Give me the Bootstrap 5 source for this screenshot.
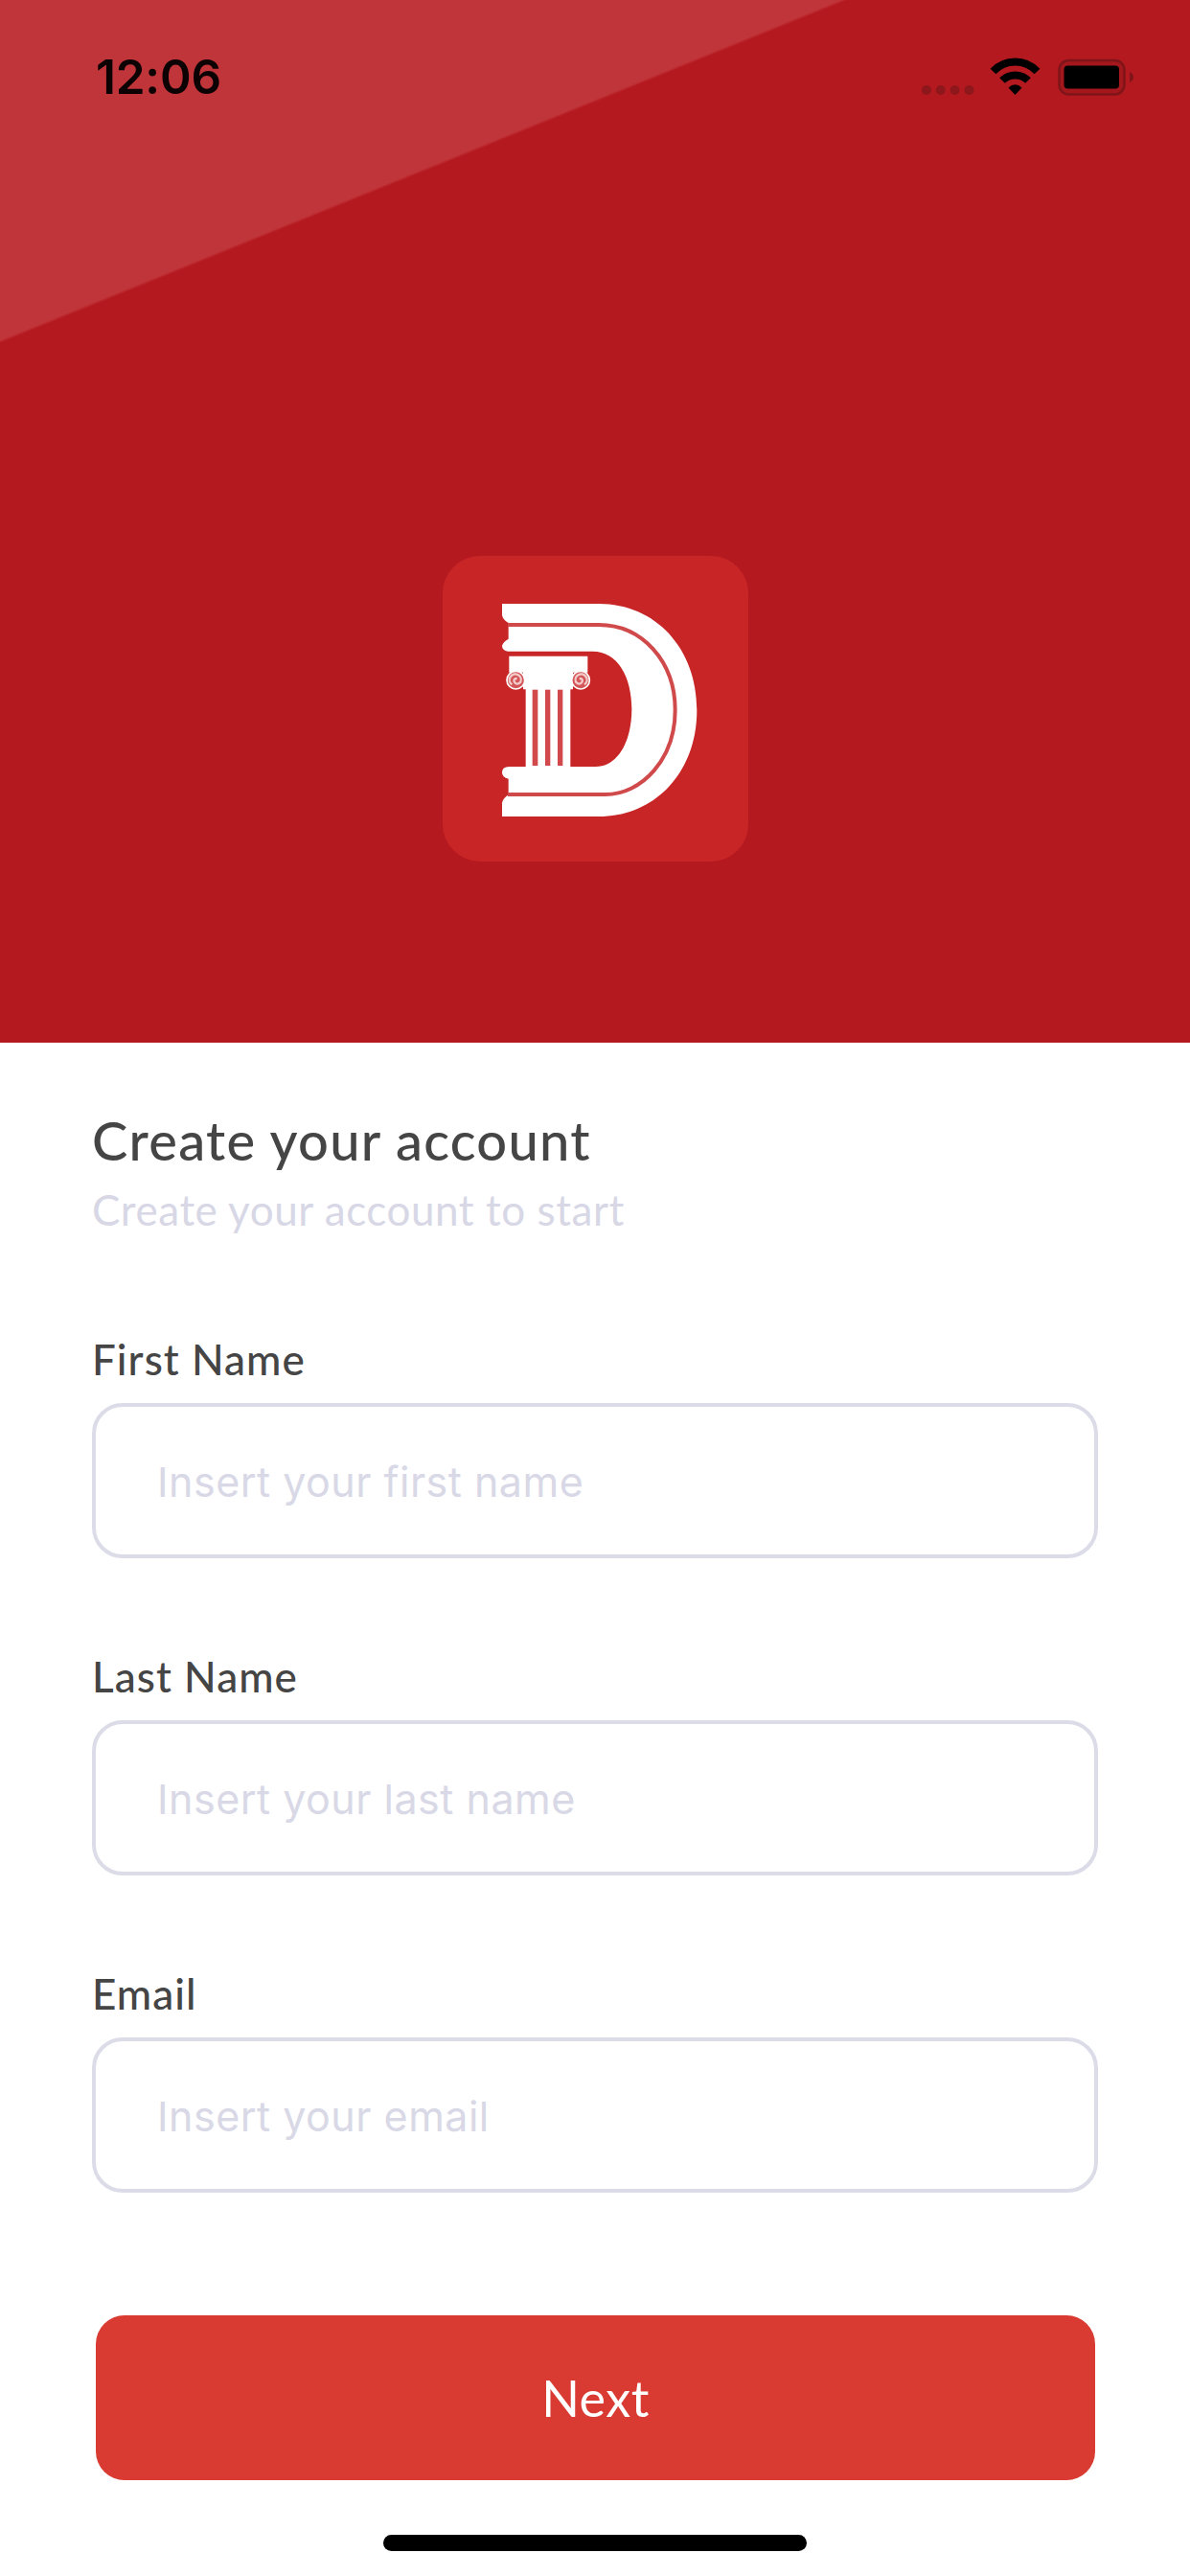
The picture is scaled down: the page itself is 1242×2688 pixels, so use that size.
<!DOCTYPE html>
<html lang="en">
<head>
<meta charset="utf-8">
<meta name="viewport" content="width=device-width, initial-scale=1">
<title>Create your account</title>
<link href="https://cdn.jsdelivr.net/npm/bootstrap@5.3.0/dist/css/bootstrap.min.css" rel="stylesheet">
<style>
body{font-family:Lato,"Noto Sans",sans-serif;background:#fff;color:#454545}
.screen{width:1242px;height:2688px}
.hero{height:1088px;background:linear-gradient(157.97deg,#c03539 0 329px,#b51920 332px)}
.status{height:160px;padding-left:100px;padding-right:58px;color:#0d0203}
.clock{font:600 49.5px/56px Inter,sans-serif;letter-spacing:-.2px}
.logo-tile{width:319px;height:319px;border-radius:39px;background:#c82526;margin-top:420px}
.form-area{padding:68px 96px 0}
.heading-main{font-size:56px;line-height:68px;font-weight:500;letter-spacing:1.3px;margin-bottom:12px}
.heading-sub{font-size:44px;line-height:52px;color:#d7d7e6;letter-spacing:.55px;margin-bottom:104px}
.field-label{font-size:44px;line-height:52px;font-weight:500;letter-spacing:1.05px;margin-bottom:20px}
.field{height:331px}
.field-input,.field-input:focus{height:162px;border:4px solid #dcdce8;border-radius:32px;padding:2px 62px 0 64px;font:400 43px Inter,sans-serif;letter-spacing:.5px;color:#454545}
.field-input::placeholder{color:#d8d8e6;opacity:1}
.btn-next,.btn-next:hover{height:172px;margin:31px 3px 57px 4px;border:0;border-radius:30px;background:#d93a32;color:#fff;font-size:52px;letter-spacing:.5px}
.home-bar{width:442px;height:17px;background:#000}
</style>
</head>
<body>
<main class="screen d-flex flex-column overflow-hidden">
  <header class="hero d-flex flex-column align-items-center flex-shrink-0">
    <div class="status w-100 d-flex justify-content-between align-items-center">
      <span class="clock">12:06</span>
      <svg width="224" height="44" viewBox="960 57 224 44">
        <g fill="#8d171b"><circle cx="967" cy="93" r="5"/><circle cx="981.700" cy="93" r="5"/><circle cx="996.600" cy="93" r="5"/><circle cx="1011.500" cy="93" r="5"/></g>
        <g fill="none" stroke="#000" stroke-width="8"><path d="M1036.500 73.500Q1046 63.500 1059.500 63.500T1082.500 73.500"/><path d="M1046 83Q1051.500 77.500 1059.500 77.500T1073 83"/></g>
        <path d="M1052.500 90.500Q1059.500 84 1066.500 90.500L1059.500 98Z"/>
        <rect x="1105.500" y="62" width="68" height="35.500" rx="10" fill="#a3171d" stroke="#7f1519" stroke-width="2.500"/>
        <rect x="1110.500" y="67.500" width="57.500" height="24" rx="4"/>
        <path d="M1179 74Q1183 76 1183 79.500T1179 85Z" fill="#7f1519"/>
      </svg>
    </div>
    <div class="logo-tile d-flex">
      <svg width="319" height="319" viewBox="66 60 957 957" role="img" aria-label="Logo">
        <path fill="#fff" d="M252 210H555C733 210 862 350 862 543S733 876 555 876H252V833Q254 820 272 808V758Q252 754 252 738Q252 720 274 720H545C615 720 658 640 658 540S615 359 535 359H270Q252 356 252 342Q254 330 272 320V270Q254 260 252 245Z"/>
        <path fill="none" stroke="#d04a4b" stroke-width="12" d="M270 276H555C690 276 794 390 794 543S690 807 575 807H270"/>
        <path fill="#fff" d="M274 374H520V425H474V478H466V722H326V478H318V425H274Z"/>
        <g fill="#d1494b"><rect x="347" y="479" width="17" height="238"/><rect x="387" y="479" width="16" height="238"/><rect x="426" y="479" width="16" height="238"/></g>
        <g fill="#d45557" stroke="#fff" stroke-width="5"><circle cx="295" cy="449" r="28"/><circle cx="498" cy="449" r="28"/></g>
        <g fill="none" stroke="#f3cccc" stroke-width="7"><path d="M283 463a18 18 0 1 1 27-8q-12 12-20-1q-3-10 9-10"/><path d="M510 463a18 18 0 1 0-27-8q12 12 20-1q3-10-9-10"/></g>
      </svg>
    </div>
  </header>
  <form class="form-area d-flex flex-column">
    <h1 class="heading-main">Create your account</h1>
    <p class="heading-sub">Create your account to start</p>
    <div class="field"><label class="field-label d-block" for="first">First Name</label><input id="first" class="form-control field-input" placeholder="Insert your first name"></div>
    <div class="field"><label class="field-label d-block" for="last">Last Name</label><input id="last" class="form-control field-input" placeholder="Insert your last name"></div>
    <div class="field"><label class="field-label d-block" for="email">Email</label><input id="email" type="email" class="form-control field-input" placeholder="Insert your email"></div>
    <button type="button" class="btn btn-next">Next</button>
  </form>
  <div class="home-bar rounded-pill mx-auto"></div>
</main>
<script src="https://cdn.jsdelivr.net/npm/bootstrap@5.3.0/dist/js/bootstrap.bundle.min.js"></script>
</body>
</html>
